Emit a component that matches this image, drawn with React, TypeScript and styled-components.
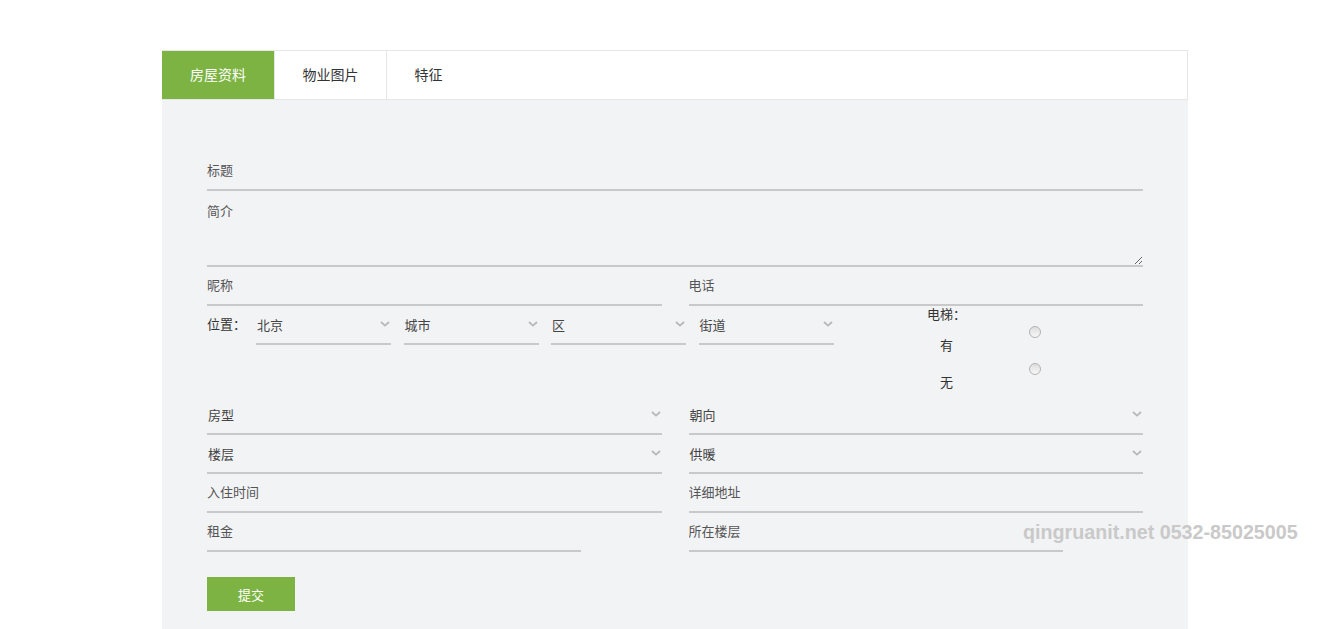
import styled, { createGlobalStyle } from 'styled-components';

const GREEN = '#7cb342';
const LINE = '#c9c9c9';

const GlobalStyle = createGlobalStyle`
  html, body {
    margin: 0;
    background: #fff;
    overflow: hidden;
  }
  body {
    font-family: "Liberation Sans", "Noto Sans CJK SC", sans-serif;
    font-size: 13px;
    color: #444;
  }
`;

const Page = styled.div`
  position: relative;
  padding: 50px 0 0 162px;
`;

const Wrapper = styled.div`
  width: 1026px;
`;

const TabBar = styled.div`
  display: flex;
  height: 48px;
  border: 1px solid #e6e6e6;
  border-left: 0;
  background: #fff;
`;

const Tab = styled.div<{ $active?: boolean; $last?: boolean }>`
  padding: 0 28px;
  line-height: 48px;
  font-size: 14px;
  color: ${p => (p.$active ? '#fff' : '#333')};
  background: ${p => (p.$active ? GREEN : 'transparent')};
  border-right: ${p => (p.$last ? 'none' : '1px solid #e6e6e6')};
  & + & {
    padding: 0 27.5px;
  }
`;

const Panel = styled.div`
  background: #f2f3f5;
  padding: 53px 45px 30px;
`;

const Form = styled.form`
  display: flex;
  flex-direction: column;
`;

const TextInput = styled.input<{ $w?: number }>`
  display: block;
  box-sizing: border-box;
  width: ${p => (p.$w ? `${p.$w}px` : '100%')};
  height: 38px;
  margin: 0 0 1px;
  padding: 0 0 2px;
  border: 0;
  border-bottom: 2px solid ${LINE};
  background: transparent;
  font: inherit;
  color: #333;
  outline: none;
  &::placeholder {
    color: #555;
  }
`;

const TextArea = styled.textarea`
  display: block;
  box-sizing: border-box;
  width: 100%;
  height: 74px;
  margin: 1px 0 1px;
  padding: 10px 0 0;
  border: 0;
  border-bottom: 2px solid ${LINE};
  background: transparent;
  font: inherit;
  line-height: 18px;
  color: #333;
  outline: none;
  &::placeholder {
    color: #555;
  }
`;

const TwoCol = styled.div`
  display: grid;
  grid-template-columns: 1fr 1fr;
  column-gap: 27px;
`;

const SelectBox = styled.div<{ $w?: number }>`
  display: flex;
  align-items: center;
  justify-content: space-between;
  box-sizing: border-box;
  width: ${p => (p.$w ? `${p.$w}px` : '100%')};
  height: 38px;
  margin-bottom: 1px;
  padding: 0 1px 2px 1px;
  border-bottom: 2px solid ${LINE};
  color: #444;
`;

const LocationRow = styled.div`
  display: flex;
  align-items: flex-start;
`;

const RowLabel = styled.span`
  width: 49px;
  line-height: 36px;
  color: #333;
`;

const Selects = styled.div`
  display: flex;
  gap: 12.5px;
`;

const Lift = styled.div`
  display: flex;
  flex-direction: column;
  margin-left: 93px;
`;

const LiftTitle = styled.span`
  width: 40px;
  text-align: center;
  white-space: nowrap;
  line-height: 16px;
  color: #333;
`;

const Option = styled.label`
  display: flex;
  height: 37px;
`;

const OptionText = styled.span`
  align-self: flex-end;
  width: 40px;
  text-align: center;
  line-height: 28px;
  color: #333;
`;

const Radio = styled.span`
  box-sizing: border-box;
  width: 12px;
  height: 12px;
  margin: 3px 0 0 62px;
  border: 1px solid #b3b3b3;
  border-radius: 50%;
  background: linear-gradient(#dedede, #f7f7f7);
`;

const SubmitButton = styled.button`
  width: 88px;
  height: 34px;
  margin-top: 24px;
  border: 0;
  background: ${GREEN};
  color: #fff;
  font: inherit;
  cursor: pointer;
`;

const Watermark = styled.div`
  position: absolute;
  left: 1023px;
  top: 520px;
  font-family: "Liberation Sans", Arial, sans-serif;
  font-weight: bold;
  font-size: 19.7px;
  line-height: 24px;
  color: #c9c9c9;
  white-space: nowrap;
`;

function Chevron() {
  return (
    <svg width="10" height="6" viewBox="0 0 10 6">
      <polyline points="1,1 5,4.6 9,1" fill="none" stroke="#b8b8b8" strokeWidth="1.8" />
    </svg>
  );
}

function Select({ label, width }: { label: string; width?: number }) {
  return (
    <SelectBox $w={width}>
      <span>{label}</span>
      <Chevron />
    </SelectBox>
  );
}

export default function App() {
  return (
    <Page>
      <GlobalStyle />
      <Wrapper>
        <TabBar>
          <Tab $active>房屋资料</Tab>
          <Tab>物业图片</Tab>
          <Tab $last>特征</Tab>
        </TabBar>
        <Panel>
          <Form onSubmit={e => e.preventDefault()}>
            <TextInput placeholder="标题" />
            <TextArea placeholder="简介" />
            <TwoCol>
              <TextInput placeholder="昵称" />
              <TextInput placeholder="电话" />
            </TwoCol>
            <LocationRow>
              <RowLabel>位置：</RowLabel>
              <Selects>
                <Select label="北京" width={135} />
                <Select label="城市" width={135} />
                <Select label="区" width={135} />
                <Select label="街道" width={135} />
              </Selects>
              <Lift>
                <LiftTitle>电梯：</LiftTitle>
                <Option>
                  <OptionText>有</OptionText>
                  <Radio />
                </Option>
                <Option>
                  <OptionText>无</OptionText>
                  <Radio />
                </Option>
              </Lift>
            </LocationRow>
            <TwoCol>
              <Select label="房型" />
              <Select label="朝向" />
            </TwoCol>
            <TwoCol>
              <Select label="楼层" />
              <Select label="供暖" />
            </TwoCol>
            <TwoCol>
              <TextInput placeholder="入住时间" />
              <TextInput placeholder="详细地址" />
            </TwoCol>
            <TwoCol>
              <TextInput placeholder="租金" $w={374} />
              <TextInput placeholder="所在楼层" $w={374} />
            </TwoCol>
            <div>
              <SubmitButton type="submit">提交</SubmitButton>
            </div>
          </Form>
        </Panel>
      </Wrapper>
      <Watermark>qingruanit.net 0532-85025005</Watermark>
    </Page>
  );
}
